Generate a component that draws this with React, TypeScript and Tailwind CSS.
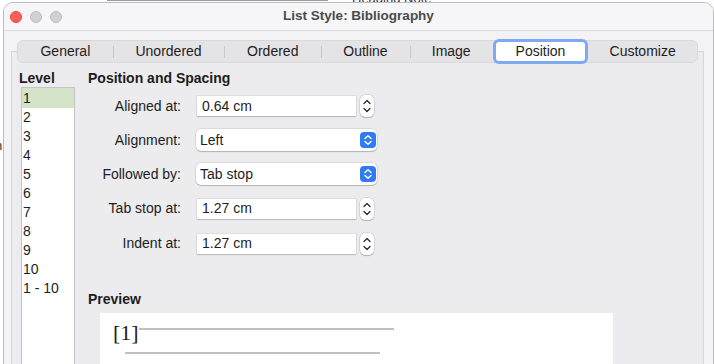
import React from "react";

const font = { fontFamily: '"Liberation Sans", Arial, sans-serif' };

function Stepper() {
  return (
    <div className="ml-[4px] w-[14px] h-[22px] rounded-[5px] bg-white shadow-[0_0_0_0.5px_rgba(0,0,0,0.18),0_1px_1px_rgba(0,0,0,0.18)] flex items-center justify-center">
      <svg width="14" height="22" viewBox="0 0 14 22" fill="none">
        <path d="M4 8.5 L7 5.5 L10 8.5" stroke="#2a2a2a" strokeWidth="1.3" strokeLinecap="round" strokeLinejoin="round" />
        <path d="M4 13.5 L7 16.5 L10 13.5" stroke="#2a2a2a" strokeWidth="1.3" strokeLinecap="round" strokeLinejoin="round" />
      </svg>
    </div>
  );
}

function SpinField({ value }: { value: string }) {
  return (
    <div className="flex items-center">
      <div className="w-[159px] h-[20px] bg-white shadow-[0_0_0_0.5px_rgba(0,0,0,0.12),0_1px_1px_rgba(0,0,0,0.15)] flex items-center pl-[5px] text-[14px] text-[#1d1d1d]">
        {value}
      </div>
      <Stepper />
    </div>
  );
}

function Dropdown({ value }: { value: string }) {
  return (
    <div className="ml-[-1px] w-[181px] h-[22px] rounded-[5px] bg-white shadow-[0_0_0_0.5px_rgba(0,0,0,0.15),0_1px_1px_rgba(0,0,0,0.18)] flex items-center justify-between pl-[4px] pr-[1px] text-[14px] text-[#1d1d1d]">
      <span>{value}</span>
      <div className="w-[16px] h-[16px] rounded-[4px] bg-[#2f7bf6] flex items-center justify-center">
        <svg width="16" height="16" viewBox="0 0 16 16" fill="none">
          <path d="M5 6.5 L8 3.8 L11 6.5" stroke="white" strokeWidth="1.5" strokeLinecap="round" strokeLinejoin="round" />
          <path d="M5 9.5 L8 12.2 L11 9.5" stroke="white" strokeWidth="1.5" strokeLinecap="round" strokeLinejoin="round" />
        </svg>
      </div>
    </div>
  );
}

function Row({ label, h, children }: { label: string; h: string; children: React.ReactNode }) {
  return (
    <div className={`flex items-center ${h}`}>
      <div className="w-[93px] text-right text-[14px] text-[#1d1d1d] whitespace-nowrap">{label}</div>
      <div className="ml-[16px]">{children}</div>
    </div>
  );
}

const tabs = [
  { name: "General", w: "w-[95px]" },
  { name: "Unordered", w: "w-[112px]" },
  { name: "Ordered", w: "w-[97px]" },
  { name: "Outline", w: "w-[89px]" },
  { name: "Image", w: "w-[83px]" },
  { name: "Position", w: "w-[96px]", active: true },
  { name: "Customize", w: "w-[109px]" },
];

export default function App() {
  const levels = ["1", "2", "3", "4", "5", "6", "7", "8", "9", "10", "1 - 10"];
  return (
    <div className="relative w-[714px] h-[364px] overflow-hidden bg-white" style={font}>
      {/* backdrop */}
      <div className="absolute left-[107px] top-0 w-[221px] h-[1px] bg-[#9a9a9a]" />
      <div className="absolute left-[352px] top-[-11px] text-[13px] text-[#333]">Heading Note</div>
      <div className="absolute left-[-5px] top-[136px] text-[13px] text-[#333]">n</div>

      {/* window */}
      <div className="absolute left-[3px] top-[2px] w-[711px] h-[380px] rounded-t-[10px] border border-[#bdbdbd] bg-[#f3f2f4] overflow-hidden flex flex-col">
        {/* title bar */}
        <div className="relative h-[28px] shrink-0 bg-[#f6f5f7] border-b border-[#d9d8da] flex items-center">
          <div className="flex items-center gap-[8px] pl-[6px]">
            <div className="w-[12px] h-[12px] rounded-full bg-[#fe5f57] border border-[#e2463f]" />
            <div className="w-[12px] h-[12px] rounded-full bg-[#d1d0d2] border border-[#bcbbbd]" />
            <div className="w-[12px] h-[12px] rounded-full bg-[#d1d0d2] border border-[#bcbbbd]" />
          </div>
          <div className="absolute inset-0 flex items-center justify-center text-[13.5px] font-bold text-[#4b4b4b]">
            List Style: Bibliography
          </div>
        </div>

        {/* body */}
        <div className="flex flex-col pt-[9px]">
          {/* tabs */}
          <div className="relative z-10 ml-[13px] w-[681px] h-[23px] rounded-[6px] bg-[#e4e3e6] border border-[#d9d8db] flex items-center">
            {tabs.map((t, i) => {
              const prevActive = i > 0 && tabs[i - 1].active;
              const showSep = i > 0 && !t.active && !prevActive;
              return (
                <div key={t.name} className={`relative ${t.w} h-full flex items-center justify-center`}>
                  {showSep && <div className="absolute left-0 top-[5px] h-[12px] w-[1px] bg-[#c9c8cb]" />}
                  {t.active ? (
                    <div className="absolute left-0 right-0 top-[-2px] bottom-[-2px] rounded-[6px] border-[3px] border-[#7eaaf3] bg-white flex items-center justify-center text-[14px] text-[#1d1d1d]">
                      {t.name}
                    </div>
                  ) : (
                    <span className="text-[14px] text-[#1d1d1d]">{t.name}</span>
                  )}
                </div>
              );
            })}
          </div>

          {/* pane */}
          <div className="-mt-[12px] ml-[7px] w-[693px] h-[330px] border border-[#d6d5d8] bg-[#ecebed] flex pt-[18px] pl-[7px]">
            {/* level column */}
            <div className="w-[69px] flex flex-col">
              <div className="text-[14px] font-bold leading-[16px] text-[#1d1d1d]">Level</div>
              <div className="mt-[1px] ml-[2px] w-[54px] h-[300px] bg-white border border-[#c4c4c6] flex flex-col">
                {levels.map((l, i) => (
                  <div
                    key={l}
                    className={`h-[19px] flex items-center pl-[1px] text-[14px] text-[#1d1d1d] whitespace-nowrap ${i === 0 ? "bg-[#d3e4c8] h-[20px]" : ""}`}
                  >
                    {l}
                  </div>
                ))}
              </div>
            </div>

            {/* right column */}
            <div className="flex flex-col">
              <div className="text-[14px] font-bold leading-[16px] text-[#1d1d1d]">Position and Spacing</div>
              <div className="mt-[3px] flex flex-col">
                <Row label="Aligned at:" h="h-[34px]"><SpinField value="0.64 cm" /></Row>
                <Row label="Alignment:" h="h-[34px]"><Dropdown value="Left" /></Row>
                <Row label="Followed by:" h="h-[34px]"><Dropdown value="Tab stop" /></Row>
                <Row label="Tab stop at:" h="h-[35px]"><SpinField value="1.27 cm" /></Row>
                <Row label="Indent at:" h="h-[35px]"><SpinField value="1.27 cm" /></Row>
              </div>
              <div className="mt-[30px] text-[14px] font-bold leading-[16px] text-[#1d1d1d]">Preview</div>
              <div className="mt-[6px] ml-[12px] w-[513px] h-[80px] bg-white pt-[8px] pl-[13px] flex flex-col">
                <div className="flex items-start">
                  <span
                    className="text-[22px] leading-[24px] text-[#1d1d1d]"
                    style={{ fontFamily: '"Liberation Serif", "Times New Roman", serif' }}
                  >
                    [1]
                  </span>
                  <div className="mt-[7px] w-[255px] h-[2px] bg-[#c0c0c0]" />
                </div>
                <div className="mt-[7px] ml-[12px] w-[255px] h-[2px] bg-[#c0c0c0]" />
              </div>
            </div>
          </div>
        </div>
      </div>
    </div>
  );
}
